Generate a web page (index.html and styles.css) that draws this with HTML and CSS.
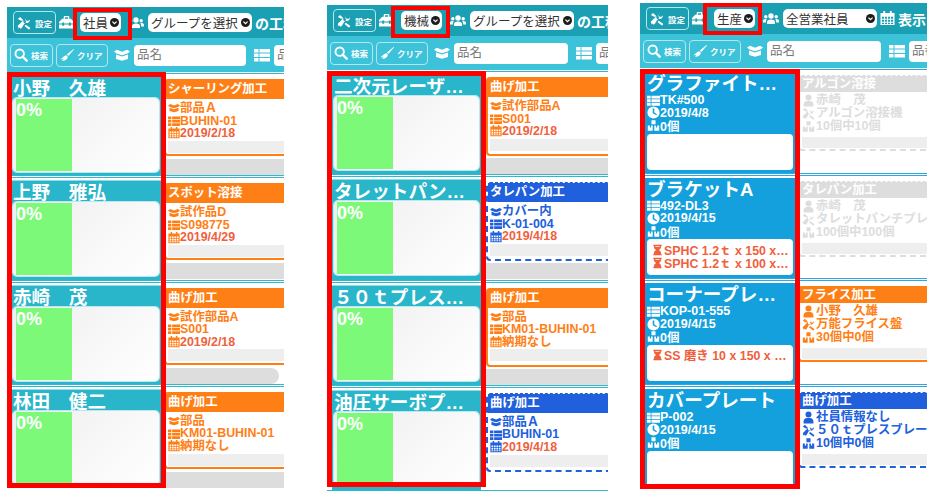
FILE: index.html
```html
<!DOCTYPE html>
<html lang="ja">
<head>
    <meta charset="UTF-8">
    <meta name="viewport" content="width=device-width, initial-scale=1.0">
    <title>工程表示</title>
    <link rel="stylesheet" href="styles.css">
</head>
<body>
    <svg class="sprite" xmlns="http://www.w3.org/2000/svg">
        <symbol id="i-tools" viewBox="0 0 16 16"><path d="M1 3.500 3.500 1l3.600 3.600.3 2.400 1.600 1.600 1.700-1.700a3.600 3.600 0 0 1 .8-5.700l-1.800 2 .9 2 2 .6 2-1.900a3.600 3.600 0 0 1-5.400 3.600L5.600 13.500a1.600 1.600 0 0 1-2.900-.6L1.900 14.500 1.500 12.800a1.700 1.700 0 0 1 .6-2.800L7 5.200 4.800 5.500zM10 9.900l4.600 3.200a1.300 1.300 0 0 1-1.900 1.800L8.600 11.300z"/></symbol>
        <symbol id="i-toolbox" viewBox="0 0 16 16"><path d="M5 4V2.200C5 1.500 5.500 1 6.200 1h3.600c.7 0 1.200.5 1.200 1.200V4h1.600L16 7.500V9h-3.500V8h-2v1h-5V8h-2v1H0V7.500L3.400 4zm1.300 0h3.400V2.300H6.300zM0 10h3.500v1.500h2V10h5v1.500h2V10H16v4.500H0z"/></symbol>
        <symbol id="i-users" viewBox="0 0 16 16"><circle cx="8" cy="5" r="2.700"/><circle cx="2.800" cy="5.800" r="1.700"/><circle cx="13.200" cy="5.800" r="1.700"/><path d="M4 13v-1.800C4 9.500 5.500 8.500 8 8.500s4 1 4 2.700V13zM0 11.500V10c0-1.300.9-2.100 2.500-2.100.5 0 .9.100 1.200.3C3 9 2.900 10 2.900 11.500zM16 11.500V10c0-1.300-.9-2.100-2.500-2.100-.5 0-.9.100-1.200.3.700.8.800 1.800.800 3.300z"/></symbol>
        <symbol id="i-search" viewBox="0 0 16 16"><circle cx="6.500" cy="6.500" r="4.800" fill="none" stroke="currentColor" stroke-width="2.200"/><path d="M10 10l4.500 4.500" stroke="currentColor" stroke-width="2.800" stroke-linecap="round"/></symbol>
        <symbol id="i-broom" viewBox="0 0 16 16"><path d="M15.500 1 16 1.800 9.500 9l-1.700-1.500zM7 8.200 9 10c-.3 2.600-2.600 4.800-7 4.500 1.300-.8 1.700-1.500 1.800-2.300-.8.500-1.800.8-3.300.600C3 11.500 4 9 7 8.200z"/></symbol>
        <symbol id="i-box" viewBox="0 0 16 16"><path d="M0 4.500 3 2.800l5 1.900 5-1.900 3 1.700-2.500 2L8 8.300 2.500 6.500zM2 7.600l6 2 6-2V12l-6 1.700L2 12z"/></symbol>
        <symbol id="i-list" viewBox="0 0 16 16"><path d="M0 2h4.500v3.500H0zM5.500 2H16v3.500H5.500zM0 6.500h4.500V10H0zM5.500 6.500H16V10H5.500zM0 11h4.500v3.500H0zM5.500 11H16v3.500H5.500z"/></symbol>
        <symbol id="i-cal" viewBox="0 0 16 16"><path fill-rule="evenodd" d="M3.500 0h2v2h5V0h2v2H15.500v13H.5V2h3zM2 6v2.200h2.300V6zm3.300 0v2.200h2.200V6zm3.200 0v2.200h2.200V6zm3.200 0v2.200H14V6zM2 9.200v2.200h2.300V9.200zm3.300 0v2.200h2.200V9.200zm3.200 0v2.200h2.200V9.200zm3.200 0v2.200H14V9.200zM2 12.400v1.400h2.300v-1.400zm3.300 0v1.400h2.200v-1.400zm3.200 0v1.400h2.200v-1.400zm3.200 0v1.400H14v-1.400z"/></symbol>
        <symbol id="i-user" viewBox="0 0 16 16"><circle cx="8" cy="4.200" r="3.700"/><path d="M2 15.500v-3c0-2.200 1.800-4 4-4h4c2.200 0 4 1.800 4 4v3z"/></symbol>
        <symbol id="i-clock" viewBox="0 0 16 16"><path fill-rule="evenodd" d="M8 .5a7.500 7.500 0 1 1 0 15 7.500 7.500 0 0 1 0-15zM7 3v6l4.500 2.500.8-1.400L9 8V3z"/></symbol>
        <symbol id="i-cubes" viewBox="0 0 16 16"><path d="M5.500 1.500h5v5h-5zM1 8h2.500v2.500h1.500V8H7v6.500H1zM9 8h2v2.500h1.500V8H15v6.500H9z"/></symbol>
        <symbol id="i-hour" viewBox="0 0 16 16"><path fill-rule="evenodd" d="M2 .5h12v2h-1v1.700c0 1.800-1.700 2.900-3 3.800 1.300.9 3 2 3 3.800v1.700h1v2H2v-2h1v-1.700C3 10 4.700 8.900 6 8 4.700 7.100 3 6 3 4.200V2.500H2zM5 2.500v1.200h6V2.500z"/></symbol>
        <symbol id="i-down" viewBox="0 0 16 16"><circle cx="8" cy="8" r="8" fill="#1c1c1c"/><path d="M4.300 6.500 8 10.200l3.700-3.700" fill="none" stroke="#fff" stroke-width="2.200"/></symbol>
    </svg>

    <div class="shots">
        <!-- 社員 -->
        <section class="panel panel-staff">
            <div class="topbar">
                <button class="btn btn-setting"><svg class="ico-btn"><use href="#i-tools"/></svg>設定</button>
                <svg class="ico-bar"><use href="#i-toolbox"/></svg>
                <span class="select sel-kind">社員<svg class="down"><use href="#i-down"/></svg></span>
                <svg class="ico-users"><use href="#i-users"/></svg>
                <span class="select sel-group">グループを選択<svg class="down"><use href="#i-down"/></svg></span>
                <span class="bar-text">の工程</span>
            </div>
            <div class="searchbar">
                <button class="btn btn-search"><svg class="ico-btn"><use href="#i-search"/></svg>検索</button>
                <button class="btn btn-clear"><svg class="ico-btn"><use href="#i-broom"/></svg>クリア</button>
                <svg class="ico-search ico-first"><use href="#i-box"/></svg>
                <span class="input input-name">品名</span>
                <svg class="ico-search"><use href="#i-list"/></svg>
                <span class="input input-code">品番</span>
            </div>
            <div class="row">
                <div class="card"><div class="name">小野　久雄</div><div class="gauge"><div class="gauge-fill">0%</div></div></div>
                <div class="side">
                    <div class="job job-orange">
                        <div class="job-title">シャーリング加工</div>
                        <div class="job-line"><svg class="ico"><use href="#i-box"/></svg>部品Ａ</div>
                        <div class="job-line"><svg class="ico"><use href="#i-list"/></svg>BUHIN-01</div>
                        <div class="job-line"><svg class="ico"><use href="#i-cal"/></svg><span class="due">2019/2/18</span></div>
                        <div class="job-bar"></div>
                    </div>
                    <div class="track"></div>
                </div>
            </div>
            <div class="row">
                <div class="card"><div class="name">上野　雅弘</div><div class="gauge"><div class="gauge-fill">0%</div></div></div>
                <div class="side">
                    <div class="job job-orange">
                        <div class="job-title">スポット溶接</div>
                        <div class="job-line"><svg class="ico"><use href="#i-box"/></svg>試作品D</div>
                        <div class="job-line"><svg class="ico"><use href="#i-list"/></svg>S098775</div>
                        <div class="job-line"><svg class="ico"><use href="#i-cal"/></svg><span class="due">2019/4/29</span></div>
                        <div class="job-bar"></div>
                    </div>
                    <div class="track"></div>
                </div>
            </div>
            <div class="row">
                <div class="card"><div class="name">赤崎　茂</div><div class="gauge"><div class="gauge-fill">0%</div></div></div>
                <div class="side">
                    <div class="job job-orange">
                        <div class="job-title">曲げ加工</div>
                        <div class="job-line"><svg class="ico"><use href="#i-box"/></svg>試作部品A</div>
                        <div class="job-line"><svg class="ico"><use href="#i-list"/></svg>S001</div>
                        <div class="job-line"><svg class="ico"><use href="#i-cal"/></svg><span class="due">2019/2/18</span></div>
                        <div class="job-bar"></div>
                    </div>
                    <div class="track track-end"></div>
                </div>
            </div>
            <div class="row">
                <div class="card"><div class="name">林田　健二</div><div class="gauge"><div class="gauge-fill">0%</div></div></div>
                <div class="side">
                    <div class="job job-orange">
                        <div class="job-title">曲げ加工</div>
                        <div class="job-line"><svg class="ico"><use href="#i-box"/></svg>部品</div>
                        <div class="job-line"><svg class="ico"><use href="#i-list"/></svg>KM01-BUHIN-01</div>
                        <div class="job-line"><svg class="ico"><use href="#i-cal"/></svg>納期なし</div>
                        <div class="job-bar"></div>
                    </div>
                    <div class="track"></div>
                </div>
            </div>
            <div class="mark mark-select"></div>
            <div class="mark mark-list"></div>
        </section>

        <!-- 機械 -->
        <section class="panel panel-machine">
            <div class="topbar">
                <button class="btn btn-setting"><svg class="ico-btn"><use href="#i-tools"/></svg>設定</button>
                <svg class="ico-bar"><use href="#i-toolbox"/></svg>
                <span class="select sel-kind">機械<svg class="down"><use href="#i-down"/></svg></span>
                <svg class="ico-users"><use href="#i-users"/></svg>
                <span class="select sel-group">グループを選択<svg class="down"><use href="#i-down"/></svg></span>
                <span class="bar-text">の工程</span>
            </div>
            <div class="searchbar">
                <button class="btn btn-search"><svg class="ico-btn"><use href="#i-search"/></svg>検索</button>
                <button class="btn btn-clear"><svg class="ico-btn"><use href="#i-broom"/></svg>クリア</button>
                <svg class="ico-search ico-first"><use href="#i-box"/></svg>
                <span class="input input-name">品名</span>
                <svg class="ico-search"><use href="#i-list"/></svg>
                <span class="input input-code">品番</span>
            </div>
            <div class="row">
                <div class="card"><div class="name">二次元レーザー加工機</div><div class="gauge"><div class="gauge-fill">0%</div></div></div>
                <div class="side">
                    <div class="job job-orange">
                        <div class="job-title">曲げ加工</div>
                        <div class="job-line"><svg class="ico"><use href="#i-box"/></svg>試作部品A</div>
                        <div class="job-line"><svg class="ico"><use href="#i-list"/></svg>S001</div>
                        <div class="job-line"><svg class="ico"><use href="#i-cal"/></svg><span class="due">2019/2/18</span></div>
                        <div class="job-bar"></div>
                    </div>
                    <div class="track"></div>
                </div>
            </div>
            <div class="row">
                <div class="card"><div class="name">タレットパンチプレス</div><div class="gauge"><div class="gauge-fill">0%</div></div></div>
                <div class="side">
                    <div class="job job-blue">
                        <div class="job-title">タレパン加工</div>
                        <div class="job-line"><svg class="ico"><use href="#i-box"/></svg>カバー内</div>
                        <div class="job-line"><svg class="ico"><use href="#i-list"/></svg>K-01-004</div>
                        <div class="job-line"><svg class="ico"><use href="#i-cal"/></svg><span class="due">2019/4/18</span></div>
                        <div class="job-bar"></div>
                    </div>
                    <div class="track"></div>
                </div>
            </div>
            <div class="row">
                <div class="card"><div class="name">５０ｔプレスブレーキ</div><div class="gauge"><div class="gauge-fill">0%</div></div></div>
                <div class="side">
                    <div class="job job-orange">
                        <div class="job-title">曲げ加工</div>
                        <div class="job-line"><svg class="ico"><use href="#i-box"/></svg>部品</div>
                        <div class="job-line"><svg class="ico"><use href="#i-list"/></svg>KM01-BUHIN-01</div>
                        <div class="job-line"><svg class="ico"><use href="#i-cal"/></svg>納期なし</div>
                        <div class="job-bar"></div>
                    </div>
                    <div class="track"></div>
                </div>
            </div>
            <div class="row">
                <div class="card"><div class="name">油圧サーボプレス機</div><div class="gauge"><div class="gauge-fill">0%</div></div></div>
                <div class="side">
                    <div class="job job-blue">
                        <div class="job-title">曲げ加工</div>
                        <div class="job-line"><svg class="ico"><use href="#i-box"/></svg>部品Ａ</div>
                        <div class="job-line"><svg class="ico"><use href="#i-list"/></svg>BUHIN-01</div>
                        <div class="job-line"><svg class="ico"><use href="#i-cal"/></svg><span class="due">2019/4/18</span></div>
                        <div class="job-bar"></div>
                    </div>
                </div>
            </div>
            <div class="mark mark-select"></div>
            <div class="mark mark-list"></div>
        </section>

        <!-- 生産 -->
        <section class="panel panel-product">
            <div class="topbar">
                <button class="btn btn-setting"><svg class="ico-btn"><use href="#i-tools"/></svg>設定</button>
                <svg class="ico-bar"><use href="#i-toolbox"/></svg>
                <span class="select sel-kind">生産<svg class="down"><use href="#i-down"/></svg></span>
                <svg class="ico-users"><use href="#i-users"/></svg>
                <span class="select sel-all">全営業社員<svg class="down"><use href="#i-down"/></svg></span>
                <svg class="ico-bar"><use href="#i-cal"/></svg>
                <span class="bar-text">表示</span>
            </div>
            <div class="searchbar">
                <button class="btn btn-search"><svg class="ico-btn"><use href="#i-search"/></svg>検索</button>
                <button class="btn btn-clear"><svg class="ico-btn"><use href="#i-broom"/></svg>クリア</button>
                <svg class="ico-search ico-first"><use href="#i-box"/></svg>
                <span class="input input-name">品名</span>
                <svg class="ico-search"><use href="#i-list"/></svg>
                <span class="input input-code">品番</span>
            </div>
            <div class="row">
                <div class="card">
                    <div class="name">グラファイトシート</div>
                    <div class="meta"><svg class="ico"><use href="#i-list"/></svg>TK#500</div>
                    <div class="meta"><svg class="ico"><use href="#i-clock"/></svg>2019/4/8</div>
                    <div class="meta"><svg class="ico"><use href="#i-cubes"/></svg>0個</div>
                    <div class="materials"></div>
                </div>
                <div class="side">
                    <div class="job job-done">
                        <div class="job-title">アルゴン溶接</div>
                        <div class="job-line"><svg class="ico"><use href="#i-user"/></svg>赤崎　茂</div>
                        <div class="job-line"><svg class="ico"><use href="#i-tools"/></svg>アルゴン溶接機</div>
                        <div class="job-line"><svg class="ico"><use href="#i-cubes"/></svg>10個中10個</div>
                        <div class="job-bar"></div>
                    </div>
                </div>
            </div>
            <div class="row">
                <div class="card">
                    <div class="name">ブラケットA</div>
                    <div class="meta"><svg class="ico"><use href="#i-list"/></svg>492-DL3</div>
                    <div class="meta"><svg class="ico"><use href="#i-clock"/></svg>2019/4/15</div>
                    <div class="meta"><svg class="ico"><use href="#i-cubes"/></svg>0個</div>
                    <div class="materials">
                        <div class="material"><svg class="ico-hour"><use href="#i-hour"/></svg><span class="material-text">SPHC 1.2ｔ x 150 x 200 x 5</span></div>
                        <div class="material"><svg class="ico-hour"><use href="#i-hour"/></svg><span class="material-text">SPHC 1.2ｔ x 100 x 200 x 5</span></div>
                    </div>
                </div>
                <div class="side">
                    <div class="job job-done">
                        <div class="job-title">タレパン加工</div>
                        <div class="job-line"><svg class="ico"><use href="#i-user"/></svg>赤崎　茂</div>
                        <div class="job-line"><svg class="ico"><use href="#i-tools"/></svg>タレットパンチプレス</div>
                        <div class="job-line"><svg class="ico"><use href="#i-cubes"/></svg>100個中100個</div>
                        <div class="job-bar"></div>
                    </div>
                </div>
            </div>
            <div class="row">
                <div class="card">
                    <div class="name">コーナープレート</div>
                    <div class="meta"><svg class="ico"><use href="#i-list"/></svg>KOP-01-555</div>
                    <div class="meta"><svg class="ico"><use href="#i-clock"/></svg>2019/4/15</div>
                    <div class="meta"><svg class="ico"><use href="#i-cubes"/></svg>0個</div>
                    <div class="materials">
                        <div class="material"><svg class="ico-hour"><use href="#i-hour"/></svg><span class="material-text">SS 磨き 10 x 150 x 200 x 5</span></div>
                    </div>
                </div>
                <div class="side">
                    <div class="job job-orange">
                        <div class="job-title">フライス加工</div>
                        <div class="job-line"><svg class="ico"><use href="#i-user"/></svg>小野　久雄</div>
                        <div class="job-line"><svg class="ico"><use href="#i-tools"/></svg>万能フライス盤</div>
                        <div class="job-line"><svg class="ico"><use href="#i-cubes"/></svg>30個中0個</div>
                        <div class="job-bar"></div>
                    </div>
                </div>
            </div>
            <div class="row">
                <div class="card">
                    <div class="name">カバープレート</div>
                    <div class="meta"><svg class="ico"><use href="#i-list"/></svg>P-002</div>
                    <div class="meta"><svg class="ico"><use href="#i-clock"/></svg>2019/4/15</div>
                    <div class="meta"><svg class="ico"><use href="#i-cubes"/></svg>0個</div>
                    <div class="materials"></div>
                </div>
                <div class="side">
                    <div class="job job-blue">
                        <div class="job-title">曲げ加工</div>
                        <div class="job-line"><svg class="ico"><use href="#i-user"/></svg>社員情報なし</div>
                        <div class="job-line"><svg class="ico"><use href="#i-tools"/></svg>５０ｔプレスブレーキ</div>
                        <div class="job-line"><svg class="ico"><use href="#i-cubes"/></svg>10個中0個</div>
                        <div class="job-bar"></div>
                    </div>
                </div>
            </div>
            <div class="mark mark-select"></div>
            <div class="mark mark-list"></div>
        </section>
    </div>
</body>
</html>
```

FILE: styles.css
```css
body {
    margin: 0;
    background-color: #fff;
    font-family: "Liberation Sans", "Noto Sans CJK JP", sans-serif;
    overflow: hidden;
}

svg {
    fill: currentColor;
}

.sprite {
    display: none;
}

.shots {
    display: flex;
    align-items: flex-start;
}

.panel {
    position: relative;
    flex: none;
    overflow: hidden;
}

.panel-staff {
    width: 277px;
    height: 481px;
    margin: 7px 0 0 7px;
}

.panel-machine {
    width: 281px;
    height: 488px;
    margin: 5px 0 0 43px;
}

.panel-product {
    width: 287px;
    height: 486px;
    margin: 3px 0 0 32px;
}

/* 上のバー */
.topbar {
    display: flex;
    align-items: center;
    height: 31px;
    padding-left: 6px;
    background-color: #1a9fb3;
    color: #fff;
    white-space: nowrap;
}

.searchbar {
    display: flex;
    align-items: center;
    height: 34px;
    padding-left: 3px;
    background-color: #3cc3d9;
    color: #fff;
    white-space: nowrap;
}

.btn {
    display: flex;
    align-items: center;
    flex: none;
    gap: 3px;
    height: 23px;
    margin-right: 3px;
    padding: 0 3px;
    box-sizing: border-box;
    border: 1px solid #b5e6ee;
    border-radius: 4px;
    background: transparent;
    color: #fff;
    font-family: inherit;
    font-size: 8.5px;
    font-weight: bold;
}

.btn-setting {
    gap: 4px;
    width: 43px;
}

.btn-search {
    width: 43px;
}

.btn-clear {
    width: 52px;
}

.ico-btn {
    width: 14px;
    height: 14px;
    flex: none;
}

.ico-bar {
    width: 15px;
    height: 15px;
    flex: none;
}

.ico-users {
    width: 16px;
    height: 16px;
    flex: none;
}

.ico-search {
    width: 16px;
    height: 16px;
    flex: none;
    margin: 0 4px 0 5px;
}

.ico-first {
    margin-left: 3px;
}

.select {
    display: flex;
    align-items: center;
    justify-content: space-between;
    flex: none;
    height: 19px;
    padding: 0 2px 0 3px;
    box-sizing: border-box;
    border-radius: 5px;
    background-color: #fff;
    color: #333;
    font-size: 12.5px;
}

.sel-kind {
    width: 41px;
    margin: 0 8px 0 7px;
}

.panel-staff .sel-kind {
    margin: 0 7px 0 6px;
}

.sel-group {
    width: 104px;
    margin-left: 4px;
}

.sel-all {
    width: 94px;
    margin: 0 3px 0 4px;
}

.down {
    width: 9px;
    height: 9px;
    flex: none;
}

.bar-text {
    margin-left: 3px;
    font-size: 14px;
    font-weight: bold;
}

.input {
    flex: none;
    height: 21px;
    padding-left: 3px;
    box-sizing: border-box;
    border-radius: 4px;
    background-color: #fff;
    color: #777;
    font-size: 12.5px;
    line-height: 21px;
}

.input-name {
    width: 114px;
    margin-right: 3px;
}

.panel-staff .input-name {
    width: 112px;
}

.input-code {
    width: 60px;
}

/* 行 */
.row {
    display: flex;
    height: 99.3px;
    padding-top: 2px;
    margin-top: 1px;
    border-top: 1px solid #30b8cd;
    border-bottom: 1px solid #30b8cd;
}

.panel-machine .row {
    height: 100.3px;
}

.panel-product .row {
    height: 100.6px;
    border-color: #2ea8e0;
}

.card {
    flex: none;
    width: 150px;
    margin-left: 4px;
    padding: 0 2px 2px;
    box-sizing: border-box;
    border-top: 1px solid #8fdbe6;
    background-color: #29b5ca;
    color: #fff;
}

.name {
    height: 21px;
    overflow: hidden;
    color: #fff;
    font-size: 18.6px;
    font-weight: bold;
    line-height: 23px;
    white-space: nowrap;
    text-overflow: ellipsis;
}

.gauge {
    display: flex;
    height: 74px;
    padding: 1px 3px;
    box-sizing: border-box;
    border-radius: 4px;
    background: linear-gradient(135deg, #eeeeee, #ffffff);
    box-shadow: 0 0 0 1px #b8e8f0;
}

.gauge-fill {
    width: 56px;
    background-color: #7df97a;
    color: #fff;
    font-size: 18px;
    font-weight: bold;
    line-height: 22px;
}

.side {
    flex: 1;
    min-width: 0;
    padding: 3px 0 0 3px;
}

.panel-machine .card {
    width: 149px;
    margin-left: 5px;
}

.panel-machine .side {
    padding: 3px 0 0 5px;
}

.job {
    height: 77px;
    box-sizing: border-box;
    border-style: solid;
    border-width: 1px 0 2px 2px;
    border-radius: 4px 0 0 4px;
    font-size: 12.4px;
    font-weight: bold;
    line-height: 12.6px;
    white-space: nowrap;
}

.panel-machine .job {
    height: 79px;
}

.panel-machine .track {
    margin-top: 2px;
}

.job-title {
    height: 19px;
    margin-bottom: 3px;
    padding-left: 2px;
    color: #fff;
    line-height: 19px;
}

.job-line {
    display: flex;
    align-items: center;
    height: 12.6px;
    padding-left: 2px;
}

.ico {
    width: 12px;
    height: 12px;
    flex: none;
}

.due {
    color: #f0603c;
}

.job-bar {
    height: 12px;
    margin: 1px 0 0 2px;
    background-color: #eeeeee;
}

.job-orange {
    border-color: #ff7f17;
    color: #ff7f17;
}

.job-orange .job-title {
    background-color: #ff7f17;
}

.job-blue {
    border-style: dashed;
    border-color: #2060dc;
    color: #2060dc;
}

.job-blue .job-title {
    background-color: #2060dc;
}

.job-done {
    border-style: dashed;
    border-color: #dddddd;
    color: #dddddd;
}

.job-done .job-title {
    background-color: #dddddd;
}

.track {
    height: 16px;
    margin-top: 3px;
    background-color: #dddddd;
}

.track-end {
    margin-right: 5px;
    border-radius: 0 8px 8px 0;
}

/* 生産 */
.panel-product .card {
    width: 150px;
    margin-left: 5px;
    background-color: #14a0dc;
    border-top: 0;
    padding-top: 1px;
}

.panel-product .name {
    line-height: 21px;
}

.panel-product .job {
    height: 76px;
}

.panel-product .job-title {
    height: 16px;
    margin-bottom: 2px;
    line-height: 16px;
}

.panel-product .job-line {
    height: 13px;
}

.panel-product .job .ico {
    width: 13px;
    height: 13px;
    margin-right: 1px;
}

.panel-product .job-bar {
    height: 11px;
    margin-top: 4px;
}

.meta {
    display: flex;
    align-items: center;
    height: 12.6px;
    font-size: 12.5px;
    font-weight: bold;
}

.meta .ico {
    width: 13px;
    height: 13px;
}

.materials {
    height: 36px;
    margin-top: 2px;
    padding: 4px 2px 4px 5px;
    box-sizing: border-box;
    border-radius: 4px;
    background-color: #fff;
}

.material {
    display: flex;
    align-items: center;
    height: 13px;
    color: #f0603c;
    font-size: 12.4px;
    font-weight: bold;
    white-space: nowrap;
}

.material-text {
    min-width: 0;
    overflow: hidden;
    text-overflow: ellipsis;
}

.ico-hour {
    width: 11px;
    height: 12px;
    flex: none;
    margin-right: 1px;
}

/* 赤い枠 */
.mark {
    position: absolute;
    box-sizing: border-box;
    border-style: solid;
    border-color: #ff0000;
}

.mark-select {
    border-width: 4px;
}

.mark-list {
    border-width: 5px;
}

.panel-staff .mark-select {
    left: 66px;
    top: 1px;
    width: 59px;
    height: 32px;
}

.panel-staff .mark-list {
    left: 0;
    top: 65px;
    width: 159px;
    height: 416px;
}

.panel-machine .mark-select {
    left: 64px;
    top: 1px;
    width: 59px;
    height: 32px;
}

.panel-machine .mark-list {
    left: 0;
    top: 66px;
    width: 159px;
    height: 416px;
}

.panel-product .mark-select {
    left: 63px;
    top: 0;
    width: 59px;
    height: 32px;
}

.panel-product .mark-list {
    left: 0;
    top: 66px;
    width: 160px;
    height: 420px;
}
```
